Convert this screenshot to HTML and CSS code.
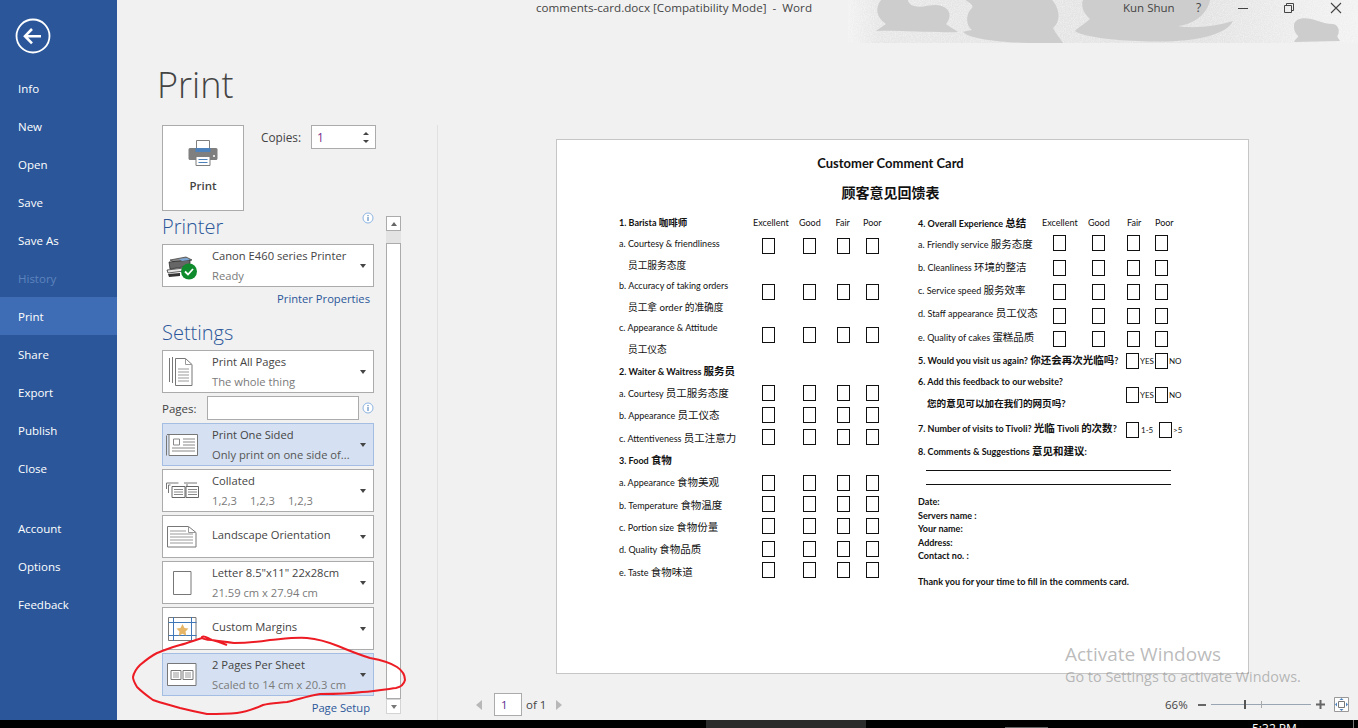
FILE: index.html
```html
<!DOCTYPE html>
<html lang="en">
<head>
<meta charset="utf-8">
<title>comments-card.docx - Word</title>
<link rel="stylesheet" href="styles.css">
</head>
<body>
<div class="app">
  <nav class="sidebar">
    <div class="back">
      <svg width="36" height="36" viewBox="0 0 36 36"><circle cx="18" cy="18" r="16.5" fill="none" stroke="#fff" stroke-width="1.8"/><path d="M10 18.2h16M17 11l-7 7.2 7 7.2" fill="none" stroke="#fff" stroke-width="2.6"/></svg>
    </div>
    <a class="nav">Info</a>
    <a class="nav">New</a>
    <a class="nav">Open</a>
    <a class="nav">Save</a>
    <a class="nav">Save As</a>
    <a class="nav off">History</a>
    <a class="nav on">Print</a>
    <a class="nav">Share</a>
    <a class="nav">Export</a>
    <a class="nav">Publish</a>
    <a class="nav">Close</a>
    <a class="nav group">Account</a>
    <a class="nav">Options</a>
    <a class="nav">Feedback</a>
  </nav>

  <main class="main">
    <svg class="art" width="510" height="43" viewBox="0 0 510 43">
      <defs>
        <linearGradient id="fade" x1="0" x2="1" y1="0" y2="0">
          <stop offset="0" stop-color="#f1f1f1"/>
          <stop offset="0.06" stop-color="#e6e6e6"/>
          <stop offset="0.7" stop-color="#e2e2e2"/>
          <stop offset="0.92" stop-color="#eeeeee"/>
          <stop offset="1" stop-color="#f1f1f1"/>
        </linearGradient>
        <filter id="grain" x="0" y="0" width="100%" height="100%">
          <feTurbulence type="fractalNoise" baseFrequency="0.9" numOctaves="2" seed="4"/>
          <feColorMatrix type="matrix" values="0 0 0 0 1  0 0 0 0 1  0 0 0 0 1  0 0 0 1.6 -0.55"/>
        </filter>
      </defs>
      <rect width="510" height="43" fill="url(#fade)"/>
      <rect width="510" height="43" filter="url(#grain)" opacity=".55"/>
      <g fill="#cdcdcd">
        <path d="M33 0C27 8 28 17 38 24C34 27 30 29 28 31C50 30 85 33 110 32C104 28 100 26 98 24C105 16 102 6 88 5C80 5 73 8 66 6C60 4 60 0 60 0Z"/>
        <path d="M119 0C115 0 127 4 124 8C117 14 118 26 124 30C120 31 117 31 115 32C125 41 165 43 190 43H215C212 38 208 34 205 28C213 22 212 8 204 0Z"/>
        <path d="M235 0C232 8 238 15 242 19C235 25 228 29 227 31C233 36 260 40 290 41C340 44 378 36 385 21C370 26 345 29 330 26C348 24 360 12 362 0Z"/>
        <path d="M446 27C445 18 456 17 463 19C472 21 477 24 484 24C490 24 492 30 490 35C488 36 491 39 492 41L446 42C447 39 451 37 450 36C447 33 446 30 446 27Z"/>
      </g>
    </svg>

    <header class="titlebar">
      <span class="doc">comments-card.docx [Compatibility Mode]  -  Word</span>
      <span class="user">Kun Shun</span>
      <span class="help">?</span>
      <svg class="win min" width="11" height="11" viewBox="0 0 11 11"><path d="M0 6.5h10" stroke="#444" fill="none"/></svg>
      <svg class="win max" width="11" height="11" viewBox="0 0 11 11"><path d="M.5 3.5h7v7h-7zM2.500 3.500v-2h7v7h-2" stroke="#444" fill="none"/></svg>
      <svg class="win cls" width="12" height="12" viewBox="0 0 12 12"><path d="M1 1l10 10M11 1L1 11" stroke="#444" stroke-width="1.1" fill="none"/></svg>
    </header>

    <div class="backstage">
      <section class="pane">
        <h1 class="heading">Print</h1>
        <div class="print-row">
          <button class="print-btn">
            <svg width="30" height="28" viewBox="0 0 30 28"><path d="M8.500 1.500h13v9h-13z" fill="#fff" stroke="#7f7f7f"/><path d="M2 9h26c1 0 1.500 1 1.500 1.500v9c0 .8-.7 1.500-1.500 1.500H2c-.8 0-1.500-.7-1.500-1.500v-9C.500 10 1 9 2 9z" fill="#7f7f7f"/><path d="M7.500 9h15v4h-15z" fill="#4d82bd"/><circle cx="26" cy="17" r="1" fill="#fff"/><path d="M8 17.500h14v9H8z" fill="#fff" stroke="#7f7f7f"/><path d="M10.500 20.500h9M10.500 23.500h9" stroke="#4d82bd" fill="none"/></svg>
            <span class="print-label">Print</span>
          </button>
          <div class="copies">
            <label class="copies-label">Copies:</label>
            <div class="spin"><span class="num">1</span><span class="spin-arrows"><i class="tri up small"></i><i class="tri small"></i></span></div>
          </div>
        </div>
        <div class="scroller">
          <div class="controls">
            <div class="sec-head printer"><h2 class="sec">Printer</h2>
              <svg class="info" width="12" height="12" viewBox="0 0 12 12"><circle cx="6" cy="6" r="5" fill="#fff" stroke="#8db4e2"/><path d="M6 5v4M6 3v1.200" stroke="#3f77b8" fill="none"/></svg>
            </div>
            <div class="drop">
              <span class="ico">
                <svg width="32" height="28" viewBox="0 0 32 28"><g transform="translate(0,3)"><path d="M4 5l16-3 6 3-16 3z" fill="#8c8c8c" stroke="#333" stroke-width=".7"/><path d="M3 7l21-2v6L4 14z" fill="#666" stroke="#222" stroke-width=".7"/><path d="M13 4l8-1 3 2-8 1z" fill="#7aa6d6"/><path d="M1 15l17-2v3L2 18z" fill="#e8e8e8" stroke="#222" stroke-width=".7"/><path d="M2 19l12-1v3L3 22z" fill="#333"/></g><circle cx="23" cy="19.500" r="8" fill="#0f8b2d"/><path d="M19 19.500l3 3 5-5.500" stroke="#fff" stroke-width="1.800" fill="none"/></svg>
              </span>
              <span class="txt"><b class="l1">Canon E460 series Printer</b><b class="l2">Ready</b></span>
              <i class="tri"></i>
            </div>
            <div class="link-row"><a class="link">Printer Properties</a></div>
            <div class="sec-head settings"><h2 class="sec">Settings</h2></div>
            <div class="list">
              <div class="drop">
                <span class="ico">
                  <svg width="26" height="30" viewBox="0 0 26 30"><path d="M.5 1v24M3.500 0v26" stroke="#777" fill="none"/><path d="M6.500 1.500h10l6.500 6v21H6.500z" fill="#fff" stroke="#777"/><path d="M16.500 1.500v6h6.500M9 12h11M9 15h11M9 18h11M9 21h11M9 24h11" stroke="#999" fill="none"/></svg>
                </span>
                <span class="txt"><b class="l1">Print All Pages</b><b class="l2">The whole thing</b></span>
                <i class="tri"></i>
              </div>
              <div class="pages">
                <label class="pages-label">Pages:</label>
                <span class="pages-input"></span>
                <svg class="info" width="12" height="12" viewBox="0 0 12 12"><circle cx="6" cy="6" r="5" fill="#fff" stroke="#8db4e2"/><path d="M6 5v4M6 3v1.200" stroke="#3f77b8" fill="none"/></svg>
              </div>
              <div class="drop sel">
                <span class="ico">
                  <svg width="32" height="24" viewBox="0 0 32 24"><path d="M.5 2.500v20M1 1.500h30.500v21H3v-21" fill="#fff" stroke="#777"/><path d="M7.500 6h6v6h-6zM17 6h12M17 9h12M17 12h12M6 15h23M6 18h23" stroke="#888" fill="none"/></svg>
                </span>
                <span class="txt"><b class="l1">Print One Sided</b><b class="l2 dark">Only print on one side of...</b></span>
                <i class="tri"></i>
              </div>
              <div class="drop">
                <span class="ico">
                  <svg width="33" height="17" viewBox="0 0 33 17"><path d="M.5 1h12M2.500 3h2M.5 1v6M2.500 3v8M18 1h13M20 3h2" stroke="#777" fill="none"/><path d="M6 4.500h13v11H6zM20 4.500h12.500v11H20z" fill="#fff" stroke="#666"/><path d="M8 7.500h9M8 10h9M8 12.500h9M22 7.500h9M22 10h9M22 12.500h9" stroke="#888" fill="none"/></svg>
                </span>
                <span class="txt"><b class="l1">Collated</b><b class="l2 seq"><em>1,2,3</em><em>1,2,3</em><em>1,2,3</em></b></span>
                <i class="tri"></i>
              </div>
              <div class="drop">
                <span class="ico">
                  <svg width="30" height="23" viewBox="0 0 30 23"><path d="M.5 1.500h21l7.500 6v14.500H.5z" fill="#fff" stroke="#777"/><path d="M21.500 1.500v6h7.500M3 6h16M3 9h23M3 12h23M3 15h23M3 18h23" stroke="#999" fill="none"/></svg>
                </span>
                <span class="txt single"><b class="l1">Landscape Orientation</b></span>
                <i class="tri"></i>
              </div>
              <div class="drop">
                <span class="ico">
                  <svg width="19" height="24" viewBox="0 0 19 24"><path d="M.5.500h17.500v23H.5z" fill="#fff" stroke="#777"/></svg>
                </span>
                <span class="txt"><b class="l1">Letter 8.5"x11" 22x28cm</b><b class="l2">21.59 cm x 27.94 cm</b></span>
                <i class="tri"></i>
              </div>
              <div class="drop">
                <span class="ico">
                  <svg width="29" height="24" viewBox="0 0 29 24"><path d="M.5.500h27.500v23H.5z" fill="#fff" stroke="#777"/><path d="M.5 5.500h28M.5 18.500h28M5.500 0v24M23.500 0v24" stroke="#3f77b8" fill="none"/><path d="M14.500 7l2 4 4 .5-3 3 .8 4.200-3.800-2-3.800 2 .8-4.200-3-3 4-.5z" fill="#e6b566"/></svg>
                </span>
                <span class="txt single"><b class="l1">Custom Margins</b></span>
                <i class="tri"></i>
              </div>
              <div class="drop sel">
                <span class="ico">
                  <svg width="30" height="23" viewBox="0 0 30 23"><path d="M.5.500h28.500v22H.5z" fill="#fff" stroke="#777"/><path d="M4 7.500h10v9H4zM16 7.500h10v9H16z" fill="#fff" stroke="#777"/><path d="M6 10h6M6 12h6M6 14h6M18 10h6M18 12h6M18 14h6" stroke="#999" fill="none"/></svg>
                </span>
                <span class="txt"><b class="l1">2 Pages Per Sheet</b><b class="l2">Scaled to 14 cm x 20.3 cm</b></span>
                <i class="tri"></i>
              </div>
            </div>
            <div class="link-row"><a class="link">Page Setup</a></div>
          </div>
          <div class="scrollbar">
            <span class="sb-btn"><i class="tri up"></i></span>
            <span class="sb-track"></span>
            <span class="sb-thumb"></span>
            <span class="sb-btn grey"><i class="tri"></i></span>
          </div>
        </div>
      </section>

      <section class="preview">
        <article class="sheet">
          <h3 class="card-title">Customer Comment Card</h3>
          <h3 class="card-title zh">顾客意见回馈表</h3>
          <div class="card-cols">
            <div class="card-col left">
              <div class="row h21 strong-head"><span class="lbl"><strong>1. Barista <span class="cn">咖啡师</span></strong></span><span class="hd"><em>Excellent</em><em>Good</em><em>Fair</em><em>Poor</em></span></div>
              <div class="row h42"><span class="lbl">a. Courtesy &amp; friendliness<br><u>员工服务态度</u></span><span class="boxes t5"><i></i><i></i><i></i><i></i></span></div>
              <div class="row h42"><span class="lbl">b. Accuracy of taking orders<br><u>员工拿 order 的准确度</u></span><span class="boxes t9"><i></i><i></i><i></i><i></i></span></div>
              <div class="row h43"><span class="lbl">c. Appearance &amp; Attitude<br><u class="low">员工仪态</u></span><span class="boxes t10"><i></i><i></i><i></i><i></i></span></div>
              <div class="row h22"><span class="lbl"><strong>2. Waiter &amp; Waitress <span class="cn">服务员</span></strong></span></div>
              <div class="row h22"><span class="lbl">a. Courtesy <span class="cn">员工服务态度</span></span><span class="boxes t3"><i></i><i></i><i></i><i></i></span></div>
              <div class="row h23"><span class="lbl">b. Appearance <span class="cn">员工仪态</span></span><span class="boxes t3"><i></i><i></i><i></i><i></i></span></div>
              <div class="row h22"><span class="lbl">c. Attentiveness <span class="cn">员工注意力</span></span><span class="boxes t2"><i></i><i></i><i></i><i></i></span></div>
              <div class="row h22"><span class="lbl"><strong>3. Food <span class="cn">食物</span></strong></span></div>
              <div class="row h23"><span class="lbl">a. Appearance <span class="cn">食物美观</span></span><span class="boxes t4"><i></i><i></i><i></i><i></i></span></div>
              <div class="row h22"><span class="lbl">b. Temperature <span class="cn">食物温度</span></span><span class="boxes t2"><i></i><i></i><i></i><i></i></span></div>
              <div class="row h22"><span class="lbl">c. Portion size <span class="cn">食物份量</span></span><span class="boxes t2"><i></i><i></i><i></i><i></i></span></div>
              <div class="row h23"><span class="lbl">d. Quality <span class="cn">食物品质</span></span><span class="boxes t3"><i></i><i></i><i></i><i></i></span></div>
              <div class="row h22"><span class="lbl">e. Taste <span class="cn">食物味道</span></span><span class="boxes t1"><i></i><i></i><i></i><i></i></span></div>
            </div>
            <div class="card-col right">
              <div class="row h21"><span class="lbl"><strong>4. Overall Experience <span class="cn">总结</span></strong></span><span class="hd"><em>Excellent</em><em>Good</em><em>Fair</em><em>Poor</em></span></div>
              <div class="row h23"><span class="lbl">a. Friendly service <span class="cn">服务态度</span></span><span class="boxes t1"><i></i><i></i><i></i><i></i></span></div>
              <div class="row h23"><span class="lbl">b. Cleanliness <span class="cn">环境的整洁</span></span><span class="boxes t3"><i></i><i></i><i></i><i></i></span></div>
              <div class="row h23"><span class="lbl">c. Service speed <span class="cn">服务效率</span></span><span class="boxes t4"><i></i><i></i><i></i><i></i></span></div>
              <div class="row h24"><span class="lbl">d. Staff appearance <span class="cn">员工仪态</span></span><span class="boxes t5"><i></i><i></i><i></i><i></i></span></div>
              <div class="row h23"><span class="lbl">e. Quality of cakes <span class="cn">蛋糕品质</span></span><span class="boxes t4"><i></i><i></i><i></i><i></i></span></div>
              <div class="row h22 opts"><span class="lbl wide"><strong>5. Would you visit us again? <span class="cn">你还会再次光临吗</span>?</strong></span><span class="opt t3"><i></i><small class="yes">YES</small><i></i><small>NO</small></span></div>
              <div class="row h46 opts"><span class="lbl wide"><strong>6. Add this feedback to our website?<br><u>您的意见可以加在我们的网页吗?</u></strong></span><span class="opt t15"><i></i><small class="yes">YES</small><i></i><small>NO</small></span></div>
              <div class="row h23 opts"><span class="lbl wide"><strong>7. Number of visits to Tivoli? <span class="cn">光临</span> Tivoli <span class="cn">的次数</span>?</strong></span><span class="opt t4"><i></i><small class="visits">1-5</small><i></i><small>&gt;5</small></span></div>
              <div class="row h22"><span class="lbl wide"><strong>8. Comments &amp; Suggestions <span class="cn">意见和建议</span>:</strong></span></div>
              <div class="rule first"></div>
              <div class="rule"></div>
              <ul class="fields">
                <li>Date:</li>
                <li>Servers name :</li>
                <li>Your name:</li>
                <li>Address:</li>
                <li>Contact no. :</li>
              </ul>
              <p class="thanks">Thank you for your time to fill in the comments card.</p>
            </div>
          </div>
        </article>
        <div class="statusbar">
          <i class="pg-arrow prev"></i>
          <span class="pg-input">1</span>
          <span class="pg-of">of 1</span>
          <i class="pg-arrow next"></i>
          <span class="zoom-val">66%</span>
          <span class="z-minus"></span>
          <span class="slider"><i class="thumb"></i><i class="mid"></i></span>
          <svg class="z-plus" width="9" height="9" viewBox="0 0 9 9"><path d="M0 4.500h9M4.500 0v9" stroke="#666" stroke-width="2" fill="none"/></svg>
          <svg class="fit" width="15" height="15" viewBox="0 0 15 15"><path d="M.5.500h14v14H.5z" fill="#fff" stroke="#999"/><path d="M4.500 4.500h6v6h-6z" fill="#fff" stroke="#777"/><path d="M7.500 1l-2 2h4zM7.500 14l-2-2h4zM1 7.500l2-2v4zM14 7.500l-2-2v4z" fill="#4d82bd"/></svg>
        </div>
      </section>
    </div>

    <div class="activate">
      <p class="act-1">Activate Windows</p>
      <p class="act-2">Go to Settings to activate Windows.</p>
    </div>
  </main>
</div>

<svg class="scribble" width="1358" height="728" viewBox="0 0 1358 728"><path d="M227 645C222 643 217 641 212 640C207 638 204 635 202 637C201 638 205 640 212 640C220 641 226 642 234 643C245 643 257 642 270 640C282 639 296 637 307 638C318 639 328 642 338 646C350 651 360 655 370 658C381 660 391 663 397 667C403 671 405 676 405 680C404 684 401 687 396 688C388 689 375 691 362 692C347 694 335 694 320 694C307 696 297 700 287 702C278 703 270 703 263 705C254 709 246 712 237 713C226 714 216 714 207 714C197 712 188 710 180 708C170 705 161 703 153 700C146 695 141 691 137 687C134 682 133 679 133 677C134 672 137 668 140 665C146 660 151 656 157 653C165 650 172 647 180 645C188 643 195 640 202 638" fill="none" stroke="#ed1c24" stroke-width="2"/></svg>

<footer class="taskbar">
  <span class="tb-active"></span>
  <span class="tb-thumb"></span>
  <span class="tb-time">5:32 PM</span>
  <span class="tb-edge"></span>
</footer>
</body>
</html>
```

FILE: styles.css
```css
* { box-sizing: border-box; }
html, body { margin: 0; padding: 0; height: 728px; overflow: hidden; }
body { font-family: "Open Sans", "Noto Sans CJK SC", sans-serif; background: #000; position: relative; }
h1, h2, h3, p, ul { margin: 0; padding: 0; font-weight: normal; }
i, em, b, u { font-style: normal; font-weight: normal; text-decoration: none; }

.app { display: flex; height: 720px; overflow: hidden; }

/* Sidebar */
.sidebar { width: 117px; background: #2b579a; display: flex; flex-direction: column; flex: none; }
.back { height: 70px; padding: 18px 0 0 15px; }
.nav { height: 38px; line-height: 38px; padding-left: 18px; color: #fff; font-size: 11.5px; }
.nav.off { color: #5d83bd; }
.nav.on { background: #3e6db5; height: 38px; margin-top: -1px; margin-bottom: 1px; line-height: 40px; }
.nav.group { margin-top: 22px; }

/* Main */
.main { flex: 1; background: #f1f1f1; position: relative; display: flex; flex-direction: column; min-width: 0; }
.art { position: absolute; left: 731px; top: 0; }
.titlebar { height: 43px; display: flex; align-items: flex-start; position: relative; color: #444; font-size: 12px; line-height: 15px; }
.doc { margin-left: 419px; width: 587px; white-space: pre; font-size: 11.65px; }
.user { width: 73px; font-size: 11.5px; }
.help { width: 42px; }
.win { position: relative; top: 2px; flex: none; }
.min { margin-right: 35px; }
.max { margin-right: 35px; }

.backstage { flex: 1; display: flex; min-height: 0; }

/* Left pane */
.pane { width: 320px; flex: none; padding-left: 45px; }
.heading { height: 82px; margin-left: -5px; font-size: 36px; line-height: 42px; padding-top: 21px; font-weight: 300; color: #444; }
.print-row { display: flex; height: 86px; }
.print-btn { width: 82px; height: 86px; padding: 13px 0 0; background: #fff; border: 1px solid #ababab; display: flex; flex-direction: column; align-items: center; font-family: inherit; }
.print-label { margin-top: 11px; font-size: 11.5px; line-height: 16px; color: #444; font-weight: 600; }
.copies { display: flex; margin-left: 17px; height: 24px; align-items: center; }
.copies-label { width: 50px; font-size: 11.8px; color: #444; }
.spin { width: 65px; height: 24px; background: #fff; border: 1px solid #ababab; display: flex; align-items: center; justify-content: space-between; padding: 0 6px 0 5px; }
.num { font-size: 12px; color: #7b2d8b; }
.spin-arrows { display: flex; flex-direction: column; gap: 5px; }

.scroller { display: flex; }
.controls { width: 212px; flex: none; }
.sec-head { display: flex; justify-content: space-between; }
.sec-head.printer { height: 33px; padding-top: 1px; }
.sec-head.settings { height: 39px; padding-top: 7px; }
.sec { font-size: 20px; line-height: 29px; color: #2b579a; font-weight: 300; }
.printer .info { margin-top: 0; }
.list { display: flex; flex-direction: column; gap: 3px; }

.drop { height: 43px; background: #fff; border: 1px solid #ababab; display: flex; align-items: center; }
.drop.sel { background: #d5e1f2; border-color: #a3bde3; }
.ico { width: 49px; flex: none; display: flex; justify-content: center; padding-right: 11px; align-items: center; }
.txt { flex: 1; display: flex; flex-direction: column; min-width: 0; }
.txt.single { margin-top: -4px; }
.l1, .l2 { display: block; font-size: 11.2px; line-height: 20px; white-space: nowrap; color: #444; }
.l2 { color: #7a7a7a; }
.l2.dark { color: #555; }
.seq { display: flex; gap: 13px; }
.tri { display: block; width: 0; height: 0; border: 3.5px solid transparent; border-top: 4px solid #444; border-bottom: 0; flex: none; }
.tri.up { border-top: 0; border-bottom: 4px solid #666; }
.tri.small { border-left-width: 3px; border-right-width: 3px; border-top-width: 3px; }
.tri.up.small { border-top-width: 0; border-bottom-width: 3px; border-bottom-color: #444; }
.drop .tri { margin-right: 7px; }

.link-row { height: 24px; display: flex; justify-content: flex-end; align-items: flex-start; padding-right: 4px; line-height: 23px; }
.link { font-size: 11.2px; color: #2b579a; }

.pages { height: 24px; display: flex; align-items: center; }
.pages-label { width: 45px; font-size: 11.5px; color: #444; }
.pages-input { width: 152px; height: 24px; background: #fff; border: 1px solid #ababab; }
.pages .info { margin-left: 3px; }

.scrollbar { width: 15px; margin: 5px 0 0 12px; display: flex; flex-direction: column; }
.sb-btn { height: 15px; flex: none; background: #fff; border: 1px solid #ababab; display: flex; align-items: center; justify-content: center; }
.sb-btn.grey { border-color: #d4d4d4; }
.sb-btn.grey .tri { border-top-color: #777; }
.sb-track { height: 12px; background: #e3e3e3; }
.sb-thumb { height: 456px; background: #fff; border: 1px solid #ababab; }

/* Preview */
.preview { flex: 1; min-width: 0; margin-top: 82px; border-left: 1px solid #e1e1e1; padding: 14px 0 0 118px; font-family: "Lato", "Noto Sans CJK SC", sans-serif; }
.sheet { width: 693px; height: 535px; background: #fff; border: 1px solid #c6c6c6; padding-top: 11px; color: #111; font-size: 9px; }
.card-title { text-align: center; font-weight: 700; font-size: 13px; line-height: 24px; margin-left: -24px; }
.card-title.zh { font-size: 14px; margin-top: 6px; margin-bottom: 7px; }
.card-cols { display: flex; padding-left: 62px; }
.card-col { flex: none; }
.card-col.left { width: 299px; --lbl: 143px; --cols: 41px 34px 29px 13px; --hd-lbl: 134px; --hd: 46px 36.5px 27.5px auto; }
.card-col.right { width: 300px; margin-top: 1px; --lbl: 135px; --cols: 39px 35px 28px 13px; --hd-lbl: 124px; --hd: 46px 39px 28px auto; }
.right .lbl { margin-top: -1px; }
.right .hd { margin-top: -1px; }

.row { display: flex; line-height: 22px; white-space: nowrap; align-items: flex-start; }
.h21 { height: 21px; } .h22 { height: 22px; } .h23 { height: 23px; } .h24 { height: 24px; }
.h42 { height: 42px; } .h43 { height: 43px; } .h46 { height: 46px; }
.lbl { width: var(--lbl); flex: none; line-height: 22px; }
.lbl.wide { width: 208px; }
.lbl u { display: inline-block; padding-left: 9px; line-height: 20px; font-size: 9.7px; }
.lbl u.low { line-height: 19px; }
.lbl strong { font-weight: 700; }
.lbl strong u { font-weight: 700; font-size: 9.6px; }
.cn { font-size: 10.5px; }
.strong-head .cn { font-size: 9.5px; }
.hd { display: grid; grid-template-columns: var(--hd); margin-left: calc(var(--hd-lbl) - var(--lbl)); }
.boxes { display: grid; grid-template-columns: var(--cols); }
.boxes i, .opt i { display: block; width: 13px; height: 16px; border: 1px solid #111; background: #fff; }
.t1 { margin-top: 1px; } .t2 { margin-top: 2px; } .t3 { margin-top: 3px; } .t4 { margin-top: 4px; } .t5 { margin-top: 5px; }
.t9 { margin-top: 9px; } .t10 { margin-top: 10px; } .t15 { margin-top: 15px; }
.opt { display: flex; align-items: center; line-height: 16px; }
.opt small { font-size: 8px; margin-left: 1px; }
.opt .yes { width: 15px; }
.opt .visits { width: 18px; margin-left: 2px; }

.rule { width: 245px; height: 1px; margin: 13px 0 0 8px; background: #111; }
.rule.first { margin-top: 7px; }
.fields { list-style: none; margin-top: 10px; font-weight: 700; font-size: 9px; line-height: 13.5px; }
.thanks { margin-top: 12px; font-weight: 700; font-size: 9.1px; line-height: 13.5px; white-space: nowrap; }

.statusbar { height: 23px; margin-top: 19px; margin-left: -80px; display: flex; align-items: center; width: 873px; font-family: "Open Sans", sans-serif; color: #444; font-size: 11.5px; }
.statusbar > * { flex: none; }
.pg-arrow { width: 0; height: 0; border: 5px solid transparent; }
.pg-arrow.prev { border-left: 0; border-right: 6px solid #b8b8b8; margin-right: 12px; }
.pg-arrow.next { border-right: 0; border-left: 6px solid #b8b8b8; margin-left: 4px; }
.pg-input { width: 28px; height: 23px; background: #fff; border: 1px solid #ababab; line-height: 21px; padding-left: 6px; color: #5c2d91; }
.pg-of { margin-left: 4px; width: 26px; white-space: nowrap; }
.zoom-val { margin-left: 603px; width: 33px; }
.z-minus { width: 8px; height: 2px; background: #666; margin-right: 5px; }
.slider { width: 100px; height: 1px; background: #9aa5b4; position: relative; margin-right: 5px; }
.thumb { position: absolute; left: 33px; top: -4px; width: 2px; height: 9px; background: #555; }
.mid { position: absolute; left: 50px; top: -3px; width: 1px; height: 7px; background: #a9a9a9; }
.z-plus { margin-right: 9px; }

/* Overlays */
.activate { position: absolute; left: 948px; top: 642px; color: rgba(130,130,130,.55); font-family: "Open Sans", sans-serif; white-space: nowrap; }
.act-1 { font-size: 19px; line-height: 25px; }
.act-2 { font-size: 14.4px; line-height: 19px; }
.scribble { position: absolute; left: 0; top: 0; pointer-events: none; }

/* Taskbar */
.taskbar { height: 8px; background: #000; display: flex; overflow: hidden; position: relative; }
.tb-active { width: 160px; margin-left: 706px; background: #2b2b2b; }
.tb-thumb { width: 43px; height: 1px; margin: 7px 0 0 139px; background: #666; }
.tb-time { margin-left: 204px; width: 101px; color: #fff; font-size: 12px; line-height: 16px; margin-top: 1px; white-space: nowrap; }
.tb-edge { width: 1px; background: #777; }
```
